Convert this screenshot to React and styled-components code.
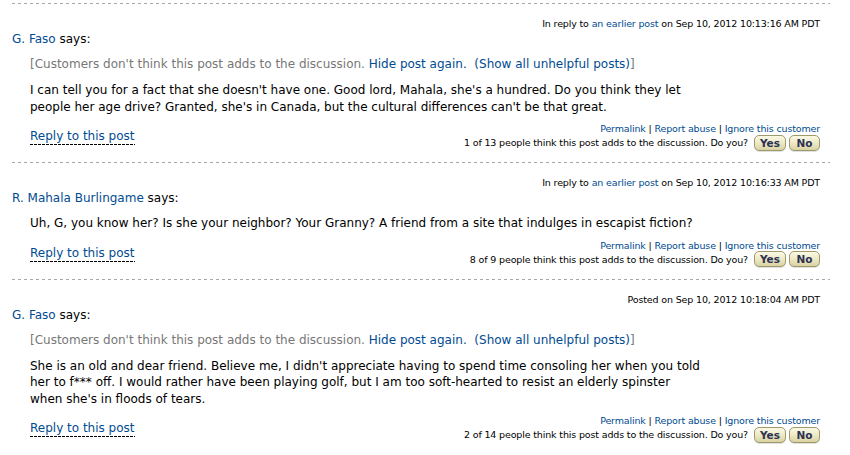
import React from "react";
import styled, { createGlobalStyle } from "styled-components";

const Global = createGlobalStyle`
  html, body { margin: 0; padding: 0; background: #fff; }
  body { font-family: "DejaVu Sans", Verdana, sans-serif; color: #000; }
`;

const Page = styled.div`
  width: 850px;
  padding: 3px 20px 0 12px;
  box-sizing: border-box;
`;

const Divider = styled.div`
  height: 1px;
  width: 818px;
  background: repeating-linear-gradient(to right, #a8a8a8 0 3px, transparent 3px 6px);
`;

const Post = styled.div`
  display: flex;
  flex-direction: column;
  padding: 0 10px 12px 0;
`;

const Meta = styled.div`
  margin-top: 13px;
  font-size: 9.5px;
  letter-spacing: -0.15px;
  line-height: 14px;
  text-align: right;
  color: #000;
`;

const Link = styled.a`
  color: #004b91;
  text-decoration: none;
  cursor: pointer;
`;

const Author = styled.div`
  font-size: 12px;
  line-height: 16px;
  margin-bottom: 9px;
`;

const Indented = styled.div`
  padding-left: 18px;
  font-size: 12px;
  line-height: 16px;
`;

const Notice = styled(Indented)`
  color: #777;
  margin-bottom: 10px;
`;

const Body = styled(Indented)`
  white-space: nowrap;
  line-height: 16.5px;
`;

const Footer = styled.div`
  margin-top: 7px;
  display: flex;
  justify-content: space-between;
  align-items: center;
`;

const ReplyLink = styled.a`
  margin-left: 18px;
  margin-top: 1px;
  font-size: 12px;
  line-height: 16px;
  color: #004b91;
  text-decoration: none;
  padding-bottom: 1px;
  background: repeating-linear-gradient(to right, #000 0 3px, transparent 3px 4px) left bottom / 100% 1px no-repeat;
`;

const Actions = styled.div`
  display: flex;
  flex-direction: column;
  align-items: flex-end;
  font-size: 9.5px;
  letter-spacing: -0.15px;
`;

const ActionLinks = styled.div`
  line-height: 13px;
  color: #000;
  white-space: pre;
`;

const VoteRow = styled.div`
  display: flex;
  align-items: center;
  height: 15px;
`;

const VoteText = styled.span`
  margin-right: 6px;
  line-height: 13px;
`;

const VoteButton = styled.button`
  box-sizing: border-box;
  height: 16px;
  width: ${(p) => p.$w}px;
  margin-left: ${(p) => (p.$first ? 0 : 3)}px;
  padding: 0;
  border: 1px solid #9f9a6a;
  border-radius: 5px;
  background: linear-gradient(to bottom, #fbf9e6 0%, #ece7c2 55%, #d8d2a2 100%);
  box-shadow: 0 1px 0 rgba(0, 0, 0, 0.12);
  font-family: "DejaVu Sans", Verdana, sans-serif;
  font-size: 10.5px;
  font-weight: bold;
  line-height: 14px;
  color: #2c3252;
  cursor: pointer;
`;

const posts = [
  {
    meta: "reply",
    date: "Sep 10, 2012 10:13:16 AM PDT",
    author: "G. Faso",
    hidden: true,
    lines: [
      "I can tell you for a fact that she doesn't have one. Good lord, Mahala, she's a hundred. Do you think they let",
      "people her age drive? Granted, she's in Canada, but the cultural differences can't be that great.",
    ],
    votes: "1 of 13",
  },
  {
    meta: "reply",
    date: "Sep 10, 2012 10:16:33 AM PDT",
    author: "R. Mahala Burlingame",
    hidden: false,
    lines: [
      "Uh, G, you know her? Is she your neighbor? Your Granny? A friend from a site that indulges in escapist fiction?",
    ],
    votes: "8 of 9",
  },
  {
    meta: "posted",
    date: "Sep 10, 2012 10:18:04 AM PDT",
    author: "G. Faso",
    hidden: true,
    lines: [
      "She is an old and dear friend. Believe me, I didn't appreciate having to spend time consoling her when you told",
      "her to f*** off. I would rather have been playing golf, but I am too soft-hearted to resist an elderly spinster",
      "when she's in floods of tears.",
    ],
    votes: "2 of 14",
  },
];

function PostItem({ p }) {
  return (
    <Post>
      <Meta>
        {p.meta === "reply" ? (
          <>
            In reply to <Link>an earlier post</Link> on {p.date}
          </>
        ) : (
          <>Posted on {p.date}</>
        )}
      </Meta>
      <Author>
        <Link>{p.author}</Link> says:
      </Author>
      {p.hidden && (
        <Notice>
          [Customers don't think this post adds to the discussion. <Link>Hide post again.</Link>
          {"\u00a0\u00a0"}
          <Link>(Show all unhelpful posts)</Link>]
        </Notice>
      )}
      <Body>
        {p.lines.map((l, i) => (
          <div key={i}>{l}</div>
        ))}
      </Body>
      <Footer>
        <ReplyLink>Reply to this post</ReplyLink>
        <Actions>
          <ActionLinks>
            <Link>Permalink</Link>{" | "}<Link>Report abuse</Link>{" | "}<Link>Ignore this customer</Link>
          </ActionLinks>
          <VoteRow>
            <VoteText>{p.votes} people think this post adds to the discussion. Do you?</VoteText>
            <VoteButton $w={32} $first>Yes</VoteButton>
            <VoteButton $w={31}>No</VoteButton>
          </VoteRow>
        </Actions>
      </Footer>
    </Post>
  );
}

export default function App() {
  return (
    <>
      <Global />
      <Page>
        {posts.map((p, i) => (
          <React.Fragment key={i}>
            <Divider />
            <PostItem p={p} />
          </React.Fragment>
        ))}
      </Page>
    </>
  );
}
